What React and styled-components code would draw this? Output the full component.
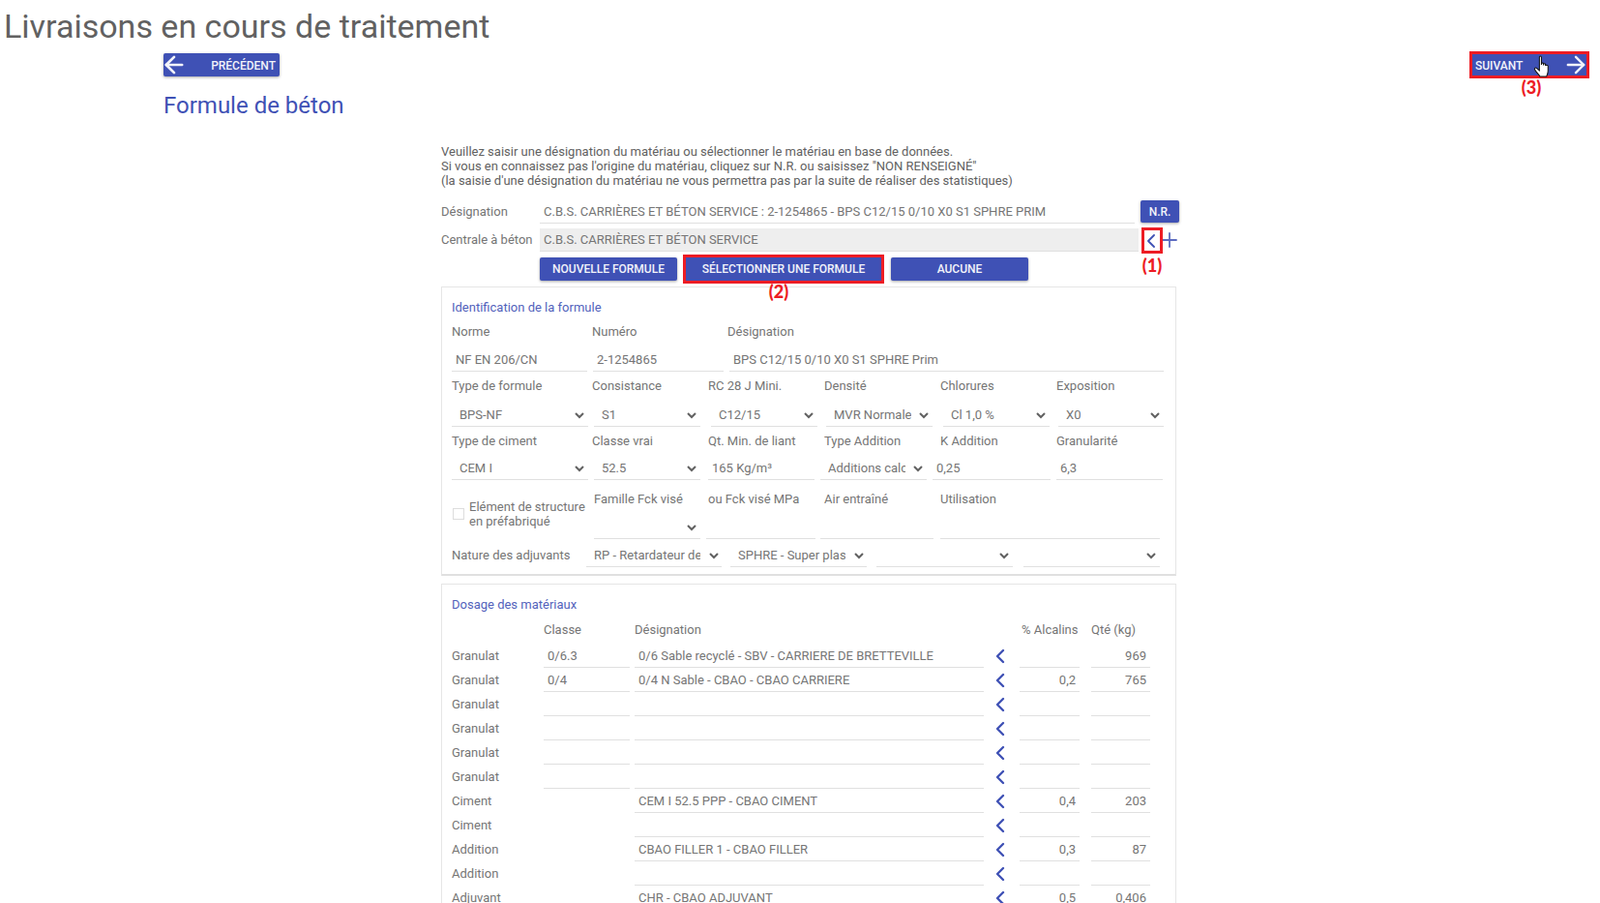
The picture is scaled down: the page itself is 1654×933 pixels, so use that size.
import styled, { createGlobalStyle } from "styled-components";
import { ArrowLeft, ArrowRight, ChevronLeft, Plus } from "lucide-react";

const GlobalStyle = createGlobalStyle`
  html, body {
    margin: 0;
    height: 100%;
    overflow: hidden;
    background: #fff;
  }
  body {
    font-family: Roboto, "Liberation Sans", sans-serif;
    font-size: 13px;
    color: #757575;
  }
`;

const Page = styled.div`
  width: 1654px;
  height: 933px;
  overflow: hidden;
`;

const Title = styled.h1`
  margin: 0;
  padding-left: 4px;
  height: 53px;
  line-height: 55px;
  font-size: 34px;
  font-weight: 400;
  color: #616161;
`;

const Nav = styled.div`
  display: flex;
  align-items: center;
  justify-content: space-between;
  height: 28px;
  padding: 0 11px 0 169px;
`;

const Button = styled.button`
  display: flex;
  align-items: center;
  justify-content: ${(p) => p.$justify || "center"};
  width: ${(p) => p.$w}px;
  height: ${(p) => p.$h || 24}px;
  margin-left: ${(p) => p.$ml || 0}px;
  padding: ${(p) => p.$pad || "0"};
  flex-shrink: 0;
  border: none;
  border-radius: ${(p) => (p.$flat ? 0 : 2)}px;
  background: #3f51b5;
  color: #f2f3fa;
  font-family: inherit;
  font-size: 12px;
  font-weight: 500;
  box-shadow: ${(p) => (p.$flat ? "none" : "0 1px 3px rgba(0, 0, 0, 0.35)")};
  cursor: pointer;
`;

const BackArrow = styled(ArrowLeft)`
  flex-shrink: 0;
  margin: -2px 0 -2px -3px;
`;

const NextArrow = styled(ArrowRight)`
  flex-shrink: 0;
  margin: -3px -3px -3px 0;
`;

const ButtonText = styled.span`
  padding-top: 1px;
`;

const Highlight = styled.div`
  position: relative;
  display: flex;
  flex-shrink: 0;
  margin: ${(p) => p.$m || 0};
  border: 3px solid #ed1c24;
`;

const Note = styled.span`
  position: absolute;
  top: 100%;
  left: 50%;
  z-index: 2;
  margin-top: ${(p) => p.$mt || 0}px;
  transform: translateX(calc(-50% + ${(p) => p.$dx || 0}px));
  font-family: Lato, sans-serif;
  font-size: 18px;
  font-weight: 900;
  line-height: 20px;
  color: #ed1c24;
`;

const Hand = styled.svg`
  position: absolute;
  top: 1px;
  left: 63px;
`;

const Heading = styled.h2`
  margin: 16px 0 0 169px;
  font-size: 24px;
  font-weight: 400;
  line-height: 24px;
  color: #3f51b5;
`;

const Form = styled.div`
  width: 760px;
  margin: 28px 0 0 456px;
`;

const Intro = styled.p`
  margin: 0 0 13px;
  line-height: 15px;
  color: #616161;
`;

const TopRow = styled.div`
  display: flex;
  margin-top: ${(p) => p.$mt || 0}px;
  padding-left: ${(p) => p.$pl || 0}px;
`;

const TopLabel = styled.div`
  width: 102px;
  flex-shrink: 0;
  line-height: 24px;
`;

const Input = styled.input`
  display: block;
  box-sizing: border-box;
  width: ${(p) => (p.$w ? `${p.$w}px` : "100%")};
  height: 24px;
  padding: 0 4px;
  flex-shrink: 0;
  border: none;
  border-bottom: 1px solid #e0e0e0;
  outline: none;
  background: ${(p) => (p.disabled ? "#eeeeee" : "transparent")};
  color: #757575;
  font-family: inherit;
  font-size: 13px;
  text-align: ${(p) => (p.$right ? "right" : "left")};
`;

const AddIcon = styled.div`
  display: flex;
  align-items: center;
  justify-content: center;
  width: 14px;
  height: 24px;
  flex-shrink: 0;
  color: #5c6bc0;
`;

const PickIcon = styled.div`
  display: flex;
  align-items: center;
  justify-content: center;
  box-sizing: border-box;
  width: 16px;
  height: 21px;
  padding-right: 2px;
  color: #3f51b5;
`;

const Panel = styled.section`
  margin-top: ${(p) => p.$mt}px;
  padding: ${(p) => p.$pt}px 12px 7px 10px;
  border: 1px solid #e6e6e6;
  border-bottom: 2px solid #e0e0e0;
  box-sizing: border-box;
`;

const PanelTitle = styled.div`
  line-height: 16px;
  color: #3f51b5;
  opacity: 0.9;
`;

const LabelRow = styled.div`
  display: flex;
  margin-top: ${(p) => p.$mt}px;
  line-height: 16px;
`;

const Label = styled.div`
  width: ${(p) => p.$w}px;
  padding-left: ${(p) => p.$pl || 0}px;
  box-sizing: border-box;
  flex-shrink: 0;
`;

const FieldRow = styled.div`
  display: flex;
  margin-top: ${(p) => p.$mt}px;
`;

const Slot = styled.div`
  position: relative;
  width: ${(p) => p.$w}px;
  margin-left: ${(p) => p.$ml || 0}px;
  flex-shrink: 0;
`;

const NativeSelect = styled.select`
  display: block;
  box-sizing: border-box;
  width: 100%;
  height: 24px;
  padding: 0 22px 0 8px;
  border: none;
  border-bottom: 1px solid #e0e0e0;
  border-radius: 0;
  outline: none;
  background: transparent;
  color: #757575;
  font-family: inherit;
  font-size: 13px;
  appearance: none;
`;

const Caret = styled.svg`
  position: absolute;
  top: 9px;
  right: ${(p) => p.$right || 4}px;
  pointer-events: none;
`;

const Select = ({ value, caret }) => (
  <>
    <NativeSelect defaultValue={value}>
      <option value={value}>{value}</option>
    </NativeSelect>
    <Caret width="10" height="7" viewBox="0 0 10 7" $right={caret}>
      <polyline points="1,1 5,5 9,1" fill="none" stroke="#616161" strokeWidth="2" />
    </Caret>
  </>
);

const CheckCell = styled.label`
  display: flex;
  align-items: center;
  width: 147px;
  height: 31px;
  margin-top: 7px;
  flex-shrink: 0;
  line-height: 15px;
`;

const Check = styled.input`
  width: 12px;
  height: 12px;
  margin: 0 5px 0 1px;
  border: 1px solid #dddddd;
  appearance: none;
  flex-shrink: 0;
`;

const Stack = styled.div`
  width: ${(p) => p.$w}px;
  margin-left: ${(p) => p.$ml || 0}px;
  flex-shrink: 0;
`;

const StackLabel = styled.div`
  height: 25px;
  padding-left: ${(p) => p.$pl || 0}px;
  line-height: 16px;
`;

const InlineLabel = styled.div`
  width: ${(p) => p.$w}px;
  flex-shrink: 0;
  line-height: 24px;
`;

const RowList = styled.div`
  display: flex;
  flex-direction: column;
  gap: 1px;
  margin-top: 7px;
`;

const Row = styled.div`
  display: flex;
  height: 24px;
`;

const Chevron = styled.div`
  display: flex;
  align-items: center;
  justify-content: center;
  width: 34px;
  margin-right: 3px;
  color: #3f51b5;
  flex-shrink: 0;
`;

const materials = [
  ["Granulat", "0/6.3", "0/6 Sable recyclé - SBV - CARRIERE DE BRETTEVILLE", "", "969"],
  ["Granulat", "0/4", "0/4 N Sable - CBAO - CBAO CARRIERE", "0,2", "765"],
  ["Granulat", "", "", "", ""],
  ["Granulat", "", "", "", ""],
  ["Granulat", "", "", "", ""],
  ["Granulat", "", "", "", ""],
  ["Ciment", null, "CEM I 52.5 PPP - CBAO CIMENT", "0,4", "203"],
  ["Ciment", null, "", "", ""],
  ["Addition", null, "CBAO FILLER 1 - CBAO FILLER", "0,3", "87"],
  ["Addition", null, "", "", ""],
  ["Adjuvant", null, "CHR - CBAO ADJUVANT", "0,5", "0,406"],
];

export default function App() {
  return (
    <Page>
      <GlobalStyle />
      <Title>Livraisons en cours de traitement</Title>
      <Nav>
        <Button $w={120} $justify="space-between" $pad="0 4px 0 0">
          <BackArrow size={28} strokeWidth={2.3} />
          <ButtonText>PRÉCÉDENT</ButtonText>
        </Button>
        <Highlight>
          <Button $w={118} $h={22} $flat $justify="space-between" $pad="0 0 0 3px">
            <ButtonText>SUIVANT</ButtonText>
            <NextArrow size={28} strokeWidth={2.1} />
          </Button>
          <Hand width="19" height="23" viewBox="0 0 18 22">
            <path
              d="M6 2C6 .7 8 .7 8 2V9.5V8.5C8 7.4 10 7.4 10 8.5V10V9.2C10 8.2 12 8.2 12 9.2V10.5C12 9.6 14.5 9.6 14.5 10.8V15.5C14.5 18 13.6 19.5 13 21H6.5C5.5 19 3.5 17.5 1.5 14.5C.6 13 2 11.8 3.2 12.8L6 15.2Z"
              fill="#fff"
              stroke="#111"
              strokeWidth="1"
            />
          </Hand>
          <Note $mt={2} $dx={2}>(3)</Note>
        </Highlight>
      </Nav>
      <Heading>Formule de béton</Heading>
      <Form>
        <Intro>
          Veuillez saisir une désignation du matériau ou sélectionner le matériau en base de données.
          <br />
          Si vous en connaissez pas l'origine du matériau, cliquez sur N.R. ou saisissez "NON RENSEIGNÉ"
          <br />
          (la saisie d'une désignation du matériau ne vous permettra pas par la suite de réaliser des statistiques)
        </Intro>

        <TopRow>
          <TopLabel>Désignation</TopLabel>
          <Input $w={615} defaultValue="C.B.S. CARRIÈRES ET BÉTON SERVICE : 2-1254865 - BPS C12/15 0/10 X0 S1 SPHRE PRIM" />
          <Button $w={40} $h={23} $ml={6}>N.R.</Button>
        </TopRow>
        <TopRow $mt={5}>
          <TopLabel>Centrale à béton</TopLabel>
          <Input $w={619} disabled defaultValue="C.B.S. CARRIÈRES ET BÉTON SERVICE" />
          <Highlight $m="-1px 0 -2px 3px">
            <PickIcon>
              <ChevronLeft size={24} strokeWidth={1.8} style={{ flexShrink: 0 }} />
            </PickIcon>
            <Note $mt={5}>(1)</Note>
          </Highlight>
          <AddIcon>
            <Plus size={24} strokeWidth={1.8} style={{ flexShrink: 0 }} />
          </AddIcon>
        </TopRow>
        <TopRow $mt={6} $pl={102}>
          <Button $w={142}>NOUVELLE FORMULE</Button>
          <Highlight $m="-3px 0 -3px 6px">
            <Button $w={202} $flat>SÉLECTIONNER UNE FORMULE</Button>
            <Note $mt={1} $dx={-5}>(2)</Note>
          </Highlight>
          <Button $w={142} $ml={7}>AUCUNE</Button>
        </TopRow>

        <Panel $mt={6} $pt={13}>
          <PanelTitle>Identification de la formule</PanelTitle>
          <LabelRow $mt={9}>
            <Label $w={145}>Norme</Label>
            <Label $w={140}>Numéro</Label>
            <Label $w={200}>Désignation</Label>
          </LabelRow>
          <FieldRow $mt={9}>
            <Slot $w={140}><Input defaultValue="NF EN 206/CN" /></Slot>
            <Slot $w={135} $ml={6}><Input defaultValue="2-1254865" /></Slot>
            <Slot $w={449} $ml={6}><Input defaultValue="BPS C12/15 0/10 X0 S1 SPHRE Prim" /></Slot>
          </FieldRow>

          <LabelRow $mt={7}>
            <Label $w={145}>Type de formule</Label>
            <Label $w={120}>Consistance</Label>
            <Label $w={120}>RC 28 J Mini.</Label>
            <Label $w={120}>Densité</Label>
            <Label $w={120}>Chlorures</Label>
            <Label $w={100}>Exposition</Label>
          </LabelRow>
          <FieldRow $mt={10}>
            <Slot $w={141}><Select value="BPS-NF" /></Slot>
            <Slot $w={110} $ml={6}><Select value="S1" /></Slot>
            <Slot $w={110} $ml={11}><Select value="C12/15" /></Slot>
            <Slot $w={110} $ml={9}><Select value="MVR Normale" /></Slot>
            <Slot $w={110} $ml={11}><Select value="Cl 1,0 %" /></Slot>
            <Slot $w={109} $ml={9}><Select value="X0" /></Slot>
          </FieldRow>

          <LabelRow $mt={7}>
            <Label $w={145}>Type de ciment</Label>
            <Label $w={120}>Classe vrai</Label>
            <Label $w={120}>Qt. Min. de liant</Label>
            <Label $w={120}>Type Addition</Label>
            <Label $w={120}>K Addition</Label>
            <Label $w={100}>Granularité</Label>
          </LabelRow>
          <FieldRow $mt={8}>
            <Slot $w={141}><Select value="CEM I" /></Slot>
            <Slot $w={110} $ml={6}><Select value="52.5" /></Slot>
            <Slot $w={110} $ml={8}><Input defaultValue="165 Kg/m³" /></Slot>
            <Slot $w={110} $ml={6}><Select value="Additions calcaires" /></Slot>
            <Slot $w={122} $ml={6}><Input defaultValue="0,25" /></Slot>
            <Slot $w={110} $ml={6}><Input defaultValue="6,3" /></Slot>
          </FieldRow>

          <FieldRow $mt={12}>
            <CheckCell>
              <Check type="checkbox" />
              <span>
                Elément de structure
                <br />
                en préfabriqué
              </span>
            </CheckCell>
            <Stack $w={110}>
              <StackLabel>Famille Fck visé</StackLabel>
              <Slot $w={110}><Select value="" /></Slot>
            </Stack>
            <Stack $w={113} $ml={6}>
              <StackLabel $pl={2}>ou Fck visé MPa</StackLabel>
              <Input />
            </Stack>
            <Stack $w={117} $ml={5}>
              <StackLabel $pl={4}>Air entraîné</StackLabel>
              <Input />
            </Stack>
            <Stack $w={227} $ml={7}>
              <StackLabel>Utilisation</StackLabel>
              <Input />
            </Stack>
          </FieldRow>

          <FieldRow $mt={5}>
            <InlineLabel $w={139}>Nature des adjuvants</InlineLabel>
            <Slot $w={140}><Select value="RP - Retardateur de prise" caret={3} /></Slot>
            <Slot $w={141} $ml={9}><Select value="SPHRE - Super plastifiant" caret={3} /></Slot>
            <Slot $w={141} $ml={10}><Select value="" /></Slot>
            <Slot $w={141} $ml={11}><Select value="" /></Slot>
          </FieldRow>
        </Panel>

        <Panel $mt={8} $pt={13}>
          <PanelTitle>Dosage des matériaux</PanelTitle>
          <LabelRow $mt={10}>
            <Label $w={189} $pl={95}>Classe</Label>
            <Label $w={400}>Désignation</Label>
            <Label $w={72}>% Alcalins</Label>
            <Label $w={60}>Qté (kg)</Label>
          </LabelRow>
          <RowList>
            {materials.map((m, i) => (
              <Row key={i}>
                <InlineLabel $w={95}>{m[0]}</InlineLabel>
                <Slot $w={89}>{m[1] !== null && <Input defaultValue={m[1]} />}</Slot>
                <Slot $w={361} $ml={5}><Input defaultValue={m[2]} /></Slot>
                <Chevron><ChevronLeft size={24} strokeWidth={2.4} /></Chevron>
                <Slot $w={62}><Input $right defaultValue={m[3]} /></Slot>
                <Slot $w={61} $ml={12}><Input $right defaultValue={m[4]} /></Slot>
              </Row>
            ))}
          </RowList>
        </Panel>
      </Form>
    </Page>
  );
}
